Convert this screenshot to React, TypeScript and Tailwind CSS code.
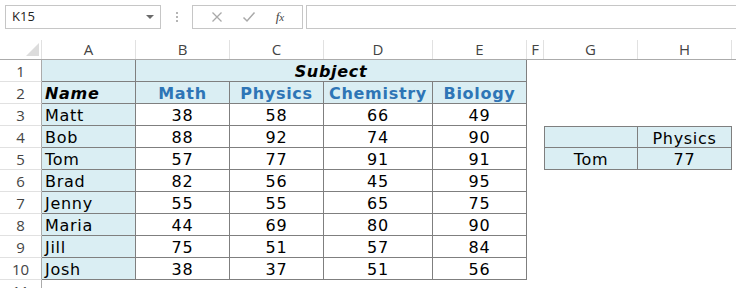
const cols = [
  { key: 'A', w: 'w-[94px]' },
  { key: 'B', w: 'w-[94px]' },
  { key: 'C', w: 'w-[94px]' },
  { key: 'D', w: 'w-[109px]' },
  { key: 'E', w: 'w-[94px]' },
  { key: 'F', w: 'w-[17px]' },
  { key: 'G', w: 'w-[94px]' },
  { key: 'H', w: 'w-[94px]' },
];

const students: [string, number, number, number, number][] = [
  ['Matt', 38, 58, 66, 49],
  ['Bob', 88, 92, 74, 90],
  ['Tom', 57, 77, 91, 91],
  ['Brad', 82, 56, 45, 95],
  ['Jenny', 55, 55, 65, 75],
  ['Maria', 44, 69, 80, 90],
  ['Jill', 75, 51, 57, 84],
  ['Josh', 38, 37, 51, 56],
];

const cell = 'h-[22px] shrink-0 leading-[20px] pt-[2px] text-[16px] tracking-[0.7px] whitespace-nowrap';
const boxed = 'border-r border-b border-[#7f7f7f]';
const blue = 'bg-[#daeef3]';

function RowHead({ n }: { n: number }) {
  return (
    <div className="w-[42px] h-[22px] shrink-0 flex items-center justify-center border-r border-b border-r-[#ababab] border-b-[#e1e1e1] text-[15px] text-[#444] pt-[1px] font-['Open_Sans',sans-serif]">
      {n}
    </div>
  );
}

function Blank({ w }: { w: string }) {
  return <div className={`${w} h-[22px] shrink-0`} />;
}

function FormulaBar() {
  return (
    <div className="h-[40px] flex items-start pt-[5px] font-['Open_Sans',sans-serif]">
      <div className="ml-[5px] w-[156px] h-[24px] border border-[#c6c6c6] flex items-center justify-between pl-[6px] pr-[6px]">
        <span className="text-[13px] text-[#222]">K15</span>
        <span className="w-0 h-0 border-l-[4px] border-r-[4px] border-t-[4px] border-l-transparent border-r-transparent border-t-[#6a6a6a]" />
      </div>
      <div className="w-[31px] h-[24px] flex flex-col items-center justify-center gap-[2px]">
        <span className="w-[2px] h-[2px] bg-[#b5b5b5]" />
        <span className="w-[2px] h-[2px] bg-[#b5b5b5]" />
        <span className="w-[2px] h-[2px] bg-[#b5b5b5]" />
      </div>
      <div className="w-[111px] h-[24px] border border-[#c6c6c6] flex items-center justify-around px-[8px]">
        <svg width="12" height="12" viewBox="0 0 12 12">
          <path d="M1.5 1.5 L10.5 10.5 M10.5 1.5 L1.5 10.5" stroke="#a9a9a9" strokeWidth="1.3" />
        </svg>
        <svg width="14" height="12" viewBox="0 0 14 12">
          <path d="M1.5 6.5 L5 10 L12.5 1.5" stroke="#a9a9a9" strokeWidth="1.5" fill="none" />
        </svg>
        <span className="italic text-[13px] text-[#444] font-['Liberation_Serif',serif]">
          f<span className="text-[11px]">x</span>
        </span>
      </div>
      <div className="ml-[3px] flex-1 h-[24px] border border-r-0 border-[#c6c6c6]" />
    </div>
  );
}

function ColumnHeaders() {
  return (
    <div className="flex h-[20px] border-b border-[#ababab] font-['Open_Sans',sans-serif] text-[15px] text-[#444]">
      <div className="w-[42px] shrink-0 relative border-r border-[#e1e1e1]">
        <svg className="absolute right-[2px] bottom-[3px]" width="13" height="13" viewBox="0 0 13 13">
          <polygon points="13,0 13,13 0,13" fill="#dcdcdc" />
        </svg>
      </div>
      {cols.map((c) => (
        <div key={c.key} className={`${c.w} shrink-0 flex items-center justify-center leading-none border-r border-[#e1e1e1]`}>
          {c.key}
        </div>
      ))}
      <div className="flex-1" />
    </div>
  );
}

export default function App() {
  return (
    <div className="w-[736px] h-[288px] overflow-hidden bg-white text-black font-['DejaVu_Sans',sans-serif]">
      <FormulaBar />
      <ColumnHeaders />

      {/* row 1 */}
      <div className="flex">
        <RowHead n={1} />
        <div className={`w-[94px] ${cell} ${boxed} ${blue}`} />
        <div className={`w-[391px] ${cell} ${boxed} ${blue} text-center font-bold italic`}>Subject</div>
        <Blank w="w-[17px]" />
      </div>

      {/* row 2 */}
      <div className="flex">
        <RowHead n={2} />
        <div className={`w-[94px] ${cell} ${boxed} ${blue} pl-[3px] font-bold italic`}>Name</div>
        {['Math', 'Physics', 'Chemistry', 'Biology'].map((s, i) => (
          <div
            key={s}
            className={`${i === 2 ? 'w-[109px]' : 'w-[94px]'} ${cell} ${boxed} ${blue} text-center font-bold text-[#2e75b6]`}
          >
            {s}
          </div>
        ))}
      </div>

      {students.map((s, r) => (
        <div className="flex" key={s[0]}>
          <RowHead n={r + 3} />
          <div className={`w-[94px] ${cell} ${boxed} ${blue} pl-[3px]`}>{s[0]}</div>
          {s.slice(1).map((v, i) => (
            <div key={i} className={`${i === 2 ? 'w-[109px]' : 'w-[94px]'} ${cell} ${boxed} text-center`}>
              {v}
            </div>
          ))}
          <Blank w="w-[17px]" />
          {r === 1 && (
            <>
              <div className={`w-[94px] ${cell} ${blue} border border-[#7f7f7f]`} />
              <div className={`w-[94px] ${cell} ${blue} border-t border-r border-b border-[#7f7f7f] text-center`}>Physics</div>
            </>
          )}
          {r === 2 && (
            <>
              <div className={`w-[94px] ${cell} ${blue} border-l border-r border-b border-[#7f7f7f] text-center`}>Tom</div>
              <div className={`w-[94px] ${cell} ${blue} border-r border-b border-[#7f7f7f] text-center`}>77</div>
            </>
          )}
        </div>
      ))}

      {/* row 11 */}
      <div className="flex">
        <RowHead n={11} />
      </div>
    </div>
  );
}
